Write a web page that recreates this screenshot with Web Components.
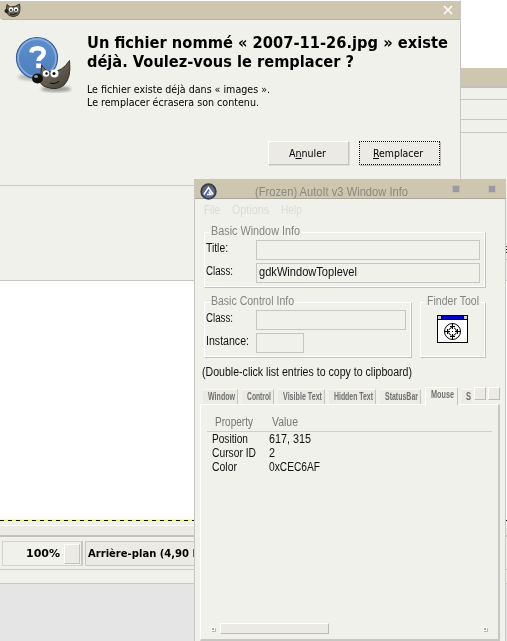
<!DOCTYPE html>
<html lang="fr"><head><meta charset="utf-8"><title>GIMP</title>
<style>
html,body{margin:0;width:507px;height:641px;overflow:hidden;background:#fff}
</style></head><body><desk-top></desk-top>
<script>
const define=(name,html,init)=>customElements.define(name,class extends HTMLElement{
  connectedCallback(){if(this.shadowRoot)return;const r=this.attachShadow({mode:'open'});r.innerHTML=html;if(init)init.call(this,r);}
});

/* One line of text, fitted horizontally to the width given in "w". */
define('fit-text',`<style>:host{display:block;flex:none;white-space:nowrap;height:1.2em;line-height:1.2}
span{display:inline-block;transform-origin:0 50%}</style><span><slot></slot></span>`,function(r){
  const w=+this.getAttribute('w');this.style.width=w+'px';
  const s=r.querySelector('span');s.style.transform='scaleX('+(w/s.getBoundingClientRect().width)+')';
});

define('gimp-logo',`<style>:host{display:block;width:58px;height:62px}svg{display:block}</style>
<svg width="58" height="62" viewBox="0 0 58 62">
<defs><linearGradient id="b" x1="0" y1="0" x2="0" y2="1"><stop offset="0" stop-color="#5d8fcd"/><stop offset="1" stop-color="#4d7fbd"/></linearGradient>
<linearGradient id="w" x1="0" y1="0" x2="1" y2="1"><stop offset="0" stop-color="#80796d"/><stop offset="1" stop-color="#433d34"/></linearGradient>
<filter id="f"><feGaussianBlur stdDeviation="1.6"/></filter></defs>
<ellipse cx="24" cy="42" rx="20" ry="4" fill="#999" opacity=".6" filter="url(#f)"/><ellipse cx="42" cy="54" rx="15" ry="3" fill="#777" opacity=".7" filter="url(#f)"/>
<circle cx="23" cy="23" r="20.5" fill="url(#b)" stroke="#365f98" stroke-width="1.2"/><circle cx="23" cy="23" r="18.9" fill="none" stroke="#88aedb" stroke-width="1.6"/>
<path d="M17.500 17.500c.2-3.500 2.700-4.300 6-4.300 3.700 0 6.200 1.600 6.200 4.600 0 4.300-5.200 4.300-5.200 8.200" fill="none" stroke="#fff" stroke-width="4.500"/><rect x="22.200" y="28.500" width="4.800" height="4.600" fill="#fff"/>
<path d="M27.500 30Q31 36 37 37Q48 37 55.500 25.500Q57.500 43 50 50Q43 56 32 52Q26 50 26 45Q27 41 27.500 30Z" fill="url(#w)" stroke="#342f29" stroke-width="1"/>
<circle cx="32" cy="38.500" r="3.200" fill="#fff"/><circle cx="40.500" cy="38.500" r="4" fill="#fff"/><circle cx="32.500" cy="38.500" r="1.200"/><circle cx="40" cy="38.500" r="1.500"/>
<path d="M36 48Q42 50 45 46" fill="none" stroke="#111" stroke-width="1.200"/>
<ellipse cx="23.500" cy="43.500" rx="5.500" ry="5" fill="#111"/><ellipse cx="22" cy="41.500" rx="2" ry="1.500" fill="#999"/></svg>`);

define('wilber-icon',`<style>:host{display:block;width:18px;height:16px}svg{display:block}</style>
<svg width="18" height="16" viewBox="0 0 18 16"><path d="M3 1.500 6 4Q12 4 15.500 1 17 8 14 12 10 15 5 12.500L2 9Z" fill="#69675a" stroke="#37362f"/>
<circle cx="7" cy="6.500" r="2.200" fill="#fff"/><circle cx="12" cy="6.500" r="2.300" fill="#fff"/><circle cx="7" cy="7" r=".9"/><circle cx="12" cy="7" r=".9"/><circle cx="2.500" cy="8" r="2" fill="#222"/><path d="M6 11Q10 12.500 13 10" stroke="#111" fill="none"/></svg>`);

define('gtk-button',`<style>:host{display:flex;box-sizing:border-box;width:81px;height:24px;background:#ebeae4;border:1px solid #fff;border-right-color:#c3c3bd;border-bottom-color:#c3c3bd;box-shadow:1px 1px 0 #ddddd7;align-items:center;justify-content:center;font:11px "DejaVu Sans Condensed","DejaVu Sans",sans-serif}
:host([focused]){border:1px dotted #111;box-shadow:1px 1px 0 #bdbdb7}
::slotted(*){margin:1px 3px 0 0}</style><slot></slot>`);

define('confirm-dialog',`<style>
:host{display:block;box-sizing:border-box;width:461px;height:186px;background:#f0f1eb;border-right:1px solid #c6c6c2;border-bottom:1px solid #c6c6c2;border-top:1px solid #fff;color:#000;font-family:"DejaVu Sans Condensed","DejaVu Sans",sans-serif;font-stretch:condensed}
header{display:flex;justify-content:space-between;height:18px;background:#cec6af;border-bottom:1px solid #b9b5a8;border-radius:0 0 0 4px;padding:0 6px 0 4px}
wilber-icon{margin-top:2px}
main{box-sizing:border-box;height:90px;display:flex;padding:13px 0 0 15px}gimp-logo{margin-top:2px;margin-left:-1px}
.t{padding-left:15px}h1{margin:0;font:bold 16px "DejaVu Sans",sans-serif;line-height:1}
h1 fit-text{height:19px;line-height:19px}.p{font-size:11px;padding-top:12px}.p fit-text{height:13px}
footer{display:flex;gap:10px;justify-content:flex-end;padding:31px 20px 0 0}
svg{margin-top:4px}</style>
<header><wilber-icon></wilber-icon><svg width="12" height="11"><path d="M2 1 10 9M10 1 2 9" stroke="#fff" stroke-width="1.500"/></svg></header>
<main><gimp-logo></gimp-logo><div class="t"><h1><fit-text w="361">Un fichier nommé « 2007-11-26.jpg » existe</fit-text><fit-text w="267">déjà. Voulez-vous le remplacer ?</fit-text></h1>
<div class="p"><fit-text w="183">Le fichier existe déjà dans « images ».</fit-text><fit-text w="172">Le remplacer écrasera son contenu.</fit-text></div></div></main>
<footer><gtk-button><fit-text w="37">A<u>n</u>nuler</fit-text></gtk-button><gtk-button focused><fit-text w="50"><u>R</u>emplacer</fit-text></gtk-button></footer>`);

define('image-window',`<style>
:host{display:flex;flex-direction:column;width:507px;height:573px;background:#f0f1eb;font:bold 11px "DejaVu Sans",sans-serif}
div{box-sizing:border-box;flex:none}
.title{height:20px;background:#cec6af;border-bottom:2px solid #c3c0b5}
.l{border-bottom:1px solid #c6c6c2}
.edge{height:148px;display:flex;flex-direction:column;align-items:flex-end;justify-content:flex-end}
.mark{width:1px;height:7px;margin-bottom:6px;background:repeating-linear-gradient(#222 0 1px,#f0f1eb 1px 3px)}
.rule{width:1px;height:1px;background:#bbb;margin-bottom:20px}
.canvas{height:239px;background:#fff}
.dash{height:1px;background:repeating-linear-gradient(90deg,#111 0 4px,#e9f56a 4px 8px);box-shadow:0 -1px #f6fbb8,0 1px #f6fbb8}
.status{display:flex;gap:2px;height:27px;padding-left:2px}
.zoom{width:81px;border:1px solid #d4d4ce;border-right:2px solid #c6c6c2;display:flex;align-items:center;padding-left:23px;gap:4px;height:25px}
.drop{width:16px;height:20px;background:#ebeae4;border:1px solid #fff;border-right-color:#c3c3bd;border-bottom-color:#c3c3bd}
.name{width:130px;height:25px;border:1px solid #c6c6c2;background:#ebeae4;display:flex;align-items:center;padding-left:2px}
.status fit-text{margin-top:1px}
</style><div class="title"></div><div class="l" style="height:12px"></div><div class="l" style="height:20px"></div><div class="l" style="height:13px"></div>
<div class="l edge"><div class="mark"></div><div class="rule"></div></div><div class="canvas"></div><div class="dash"></div><div style="height:5px;border-bottom:1px solid #fff"></div>
<div style="height:11px;background:#ebeae4;border-bottom:2px solid #c3c3bd"></div><div style="height:4px"></div>
<div class="status"><div class="zoom"><fit-text w="34">100%</fit-text><div class="drop"></div></div><div class="name"><fit-text w="126">Arrière-plan (4,90 Mo)</fit-text></div></div>
<div class="l" style="height:2px"></div><div class="l" style="height:14px"></div><div style="flex:1;background:#e5e5e5"></div>`);

define('group-box',`<style>:host{display:block;position:relative;box-sizing:border-box;border:1px solid #fff;border-right-color:#c3c3bd;border-bottom-color:#c3c3bd;box-shadow:inset -1px -1px #fff}
.c{position:absolute;top:-9px;left:5px;background:#f0f1eb;padding:0 1px;color:#858585}</style><div class="c"><slot name="caption"></slot></div><slot></slot>`);
define('form-row',`<style>:host{display:flex;height:23px}.n{box-sizing:border-box;width:51px;padding:1px 0 0 1px}.b{box-sizing:border-box;height:20px;border:1px solid #c6c6c2;display:flex;align-items:center;padding:0 0 1px 2px}</style><div class="n"><slot name="label"></slot></div><div class="b"><slot></slot></div>`,function(r){r.querySelector('.b').style.width=this.getAttribute('w')+'px'});
define('finder-icon',`<style>:host{display:block;width:31px;height:28px}svg{display:block}</style><svg width="31" height="28"><g shape-rendering="crispEdges"><rect x=".5" y=".5" width="30" height="27" fill="#fff" stroke="#000"/><rect x="1" y="1" width="29" height="3" fill="#0000c8"/><rect x="0" y="4" width="31" height="1"/><path d="M0 0h5v5H0zM26 0h5v5h-5z"/><path d="M1 1h3v3H1zM27 1h3v3h-3z" fill="#ccc"/></g><g fill="none" stroke="#000"><circle cx="15.500" cy="16.500" r="8"/><circle cx="15.500" cy="16.500" r="4" stroke-dasharray="4.200 2.080" stroke-dashoffset="-1"/><path d="M15.500 8v6M15.500 19v6M7 16.500h6M18 16.500h6M13 11.500h5M13 21.500h5M10.500 14v5M20.500 14v5" shape-rendering="crispEdges"/></g><rect x="15" y="16" width="1" height="1"/></svg>`);
define('tab-item',`<style>:host{display:flex;flex:none;box-sizing:border-box;height:15px;background:#ebeae4;border-right:1px solid #c3c3bd;border-top:1px solid #f8f8f5;padding:1px 0 0 5px;color:#707070;font:bold 10px "Liberation Sans Narrow","Liberation Sans",sans-serif;overflow:hidden}
:host([active]){height:18px;background:#f0f1eb;border:1px solid #fff;border-bottom:0;border-right:1px solid #c3c3bd;margin-bottom:-1px}
:host([clipped]){padding-left:4px;border-right:0}</style><slot></slot>`,function(){this.style.width=this.getAttribute('width')+'px'});

define('info-window',`<style>
:host{display:block;box-sizing:border-box;width:312px;height:462px;background:#f0f1eb;border:1px solid #c6c6c2;border-top:0;border-bottom:0;font:12px "Liberation Sans",sans-serif;color:#111}
header{box-sizing:border-box;height:20px;background:#cec6af;border-bottom:1px solid #a8a59b;display:flex;padding-left:5px;color:#8c887c;width:311px}
header svg{flex:none;margin-top:4px;overflow:visible}
header .tt{padding:6px 0 0 38px;margin-right:44px}i{display:block;box-sizing:border-box;width:8px;height:8px;background:#989aa6;border:1px solid #bfbcb2;margin-top:6px}
nav{display:flex;gap:12px;padding:4px 0 0 9px;height:21px;color:#dcdcd6}
.groups{display:flex;gap:8px;padding-left:9px}
.note{padding:7px 0 0 7px;height:23px;box-sizing:border-box}
.tabs{display:flex;align-items:flex-end;gap:4px;padding-left:8px;height:18px}
.b{flex:none;box-sizing:border-box;width:12px;height:13px;background:#ebeae4;border:1px solid #fff;border-right-color:#bbb;border-bottom-color:#bbb;margin:0 0 4px -2px}
.page{box-sizing:border-box;margin-left:5px;width:300px;height:237px;border:1px solid #fff;border-right:2px solid #c6c6c2;border-bottom:2px solid #c6c6c2;padding:10px 6px 0;display:flex;flex-direction:column}
.h,.r{display:grid;grid-template-columns:57px auto}
.h{padding:0 0 0 8px;height:16px;border-bottom:1px solid #d0d0ca;color:#777}
.r{padding-left:5px;height:14px}
.sc{display:flex;align-items:center;margin-top:auto;margin-bottom:5px;padding:0 5px 0 4px}
.dot{width:2px;height:2px;background:#aaa;border:1px solid #fff;box-shadow:1px 1px #bbb}
.th{box-sizing:border-box;width:109px;height:11px;border:1px solid #fff;border-right:1px solid #bbb;border-bottom:1px solid #bbb;background:#ebeae4;margin:0 auto 0 5px}
</style>
<header><svg width="17" height="17" viewBox="0 0 17 17"><defs><linearGradient id="g" x1="0" y1="0" x2="0" y2="1"><stop offset="0" stop-color="#5d606e"/><stop offset="1" stop-color="#5c74b8"/></linearGradient></defs><circle cx="8.500" cy="8.500" r="7.300" fill="url(#g)" stroke="#3a3e48" stroke-width="1.800"/><path d="M3.800 11.500 8.500 4.500 13.200 11.500M7 11.500h4L8.800 8.500" fill="none" stroke="#fff" stroke-width="1.400"/></svg>
<div class="tt"><fit-text w="153">(Frozen) AutoIt v3 Window Info</fit-text></div><i></i><i style="margin-left:28px"></i></header>
<nav><fit-text w="16">File</fit-text><fit-text w="37">Options</fit-text><fit-text w="21">Help</fit-text></nav>
<div class="groups" style="padding-top:8px"><group-box style="width:282px;height:56px;padding:7px 0 0 0"><fit-text slot="caption" w="89">Basic Window Info</fit-text>
<form-row w="224"><fit-text slot="label" w="22">Title:</fit-text></form-row><form-row w="224"><fit-text slot="label" w="27">Class:</fit-text><fit-text w="98">gdkWindowToplevel</fit-text></form-row></group-box></div>
<div class="groups" style="padding-top:14px"><group-box style="width:208px;height:56px;padding-top:7px"><fit-text slot="caption" w="83">Basic Control Info</fit-text><form-row w="150"><fit-text slot="label" w="27">Class:</fit-text></form-row><form-row w="48"><fit-text slot="label" w="43">Instance:</fit-text></form-row></group-box>
<group-box style="width:66px;height:56px;padding:12px 0 0 16px"><fit-text slot="caption" w="52">Finder Tool</fit-text><finder-icon></finder-icon></group-box></div>
<div class="note"><fit-text w="210">(Double-click list entries to copy to clipboard)</fit-text></div>
<div style="height:5px"></div>
<div class="tabs"><tab-item width="35"><fit-text w="27">Window</fit-text></tab-item><tab-item width="32"><fit-text w="24">Control</fit-text></tab-item><tab-item width="47"><fit-text w="39">Visible Text</fit-text></tab-item><tab-item width="47"><fit-text w="39">Hidden Text</fit-text></tab-item><tab-item width="41"><fit-text w="33">StatusBar</fit-text></tab-item><tab-item active width="33"><fit-text w="23">Mouse</fit-text></tab-item><tab-item clipped width="10"><fit-text w="5">S</fit-text></tab-item><div class="b"></div><div class="b"></div></div>
<div class="page"><div class="h"><fit-text w="38">Property</fit-text><fit-text w="26">Value</fit-text></div>
<div class="r"><fit-text w="36">Position</fit-text><fit-text w="42">617, 315</fit-text></div><div class="r"><fit-text w="44">Cursor ID</fit-text><fit-text w="6">2</fit-text></div><div class="r"><fit-text w="25">Color</fit-text><fit-text w="51">0xCEC6AF</fit-text></div>
<div class="sc"><div class="dot"></div><div class="th"></div><div class="dot"></div></div></div>`);

define('desk-top',`<style>:host{display:block;position:relative;width:507px;height:641px;overflow:hidden;background:#fff}
image-window,confirm-dialog,info-window{position:absolute}image-window{left:0;top:68px}confirm-dialog{left:0;top:0}info-window{left:194px;top:179px}</style>
<image-window></image-window><confirm-dialog></confirm-dialog><info-window></info-window>`);
</script></body></html>
